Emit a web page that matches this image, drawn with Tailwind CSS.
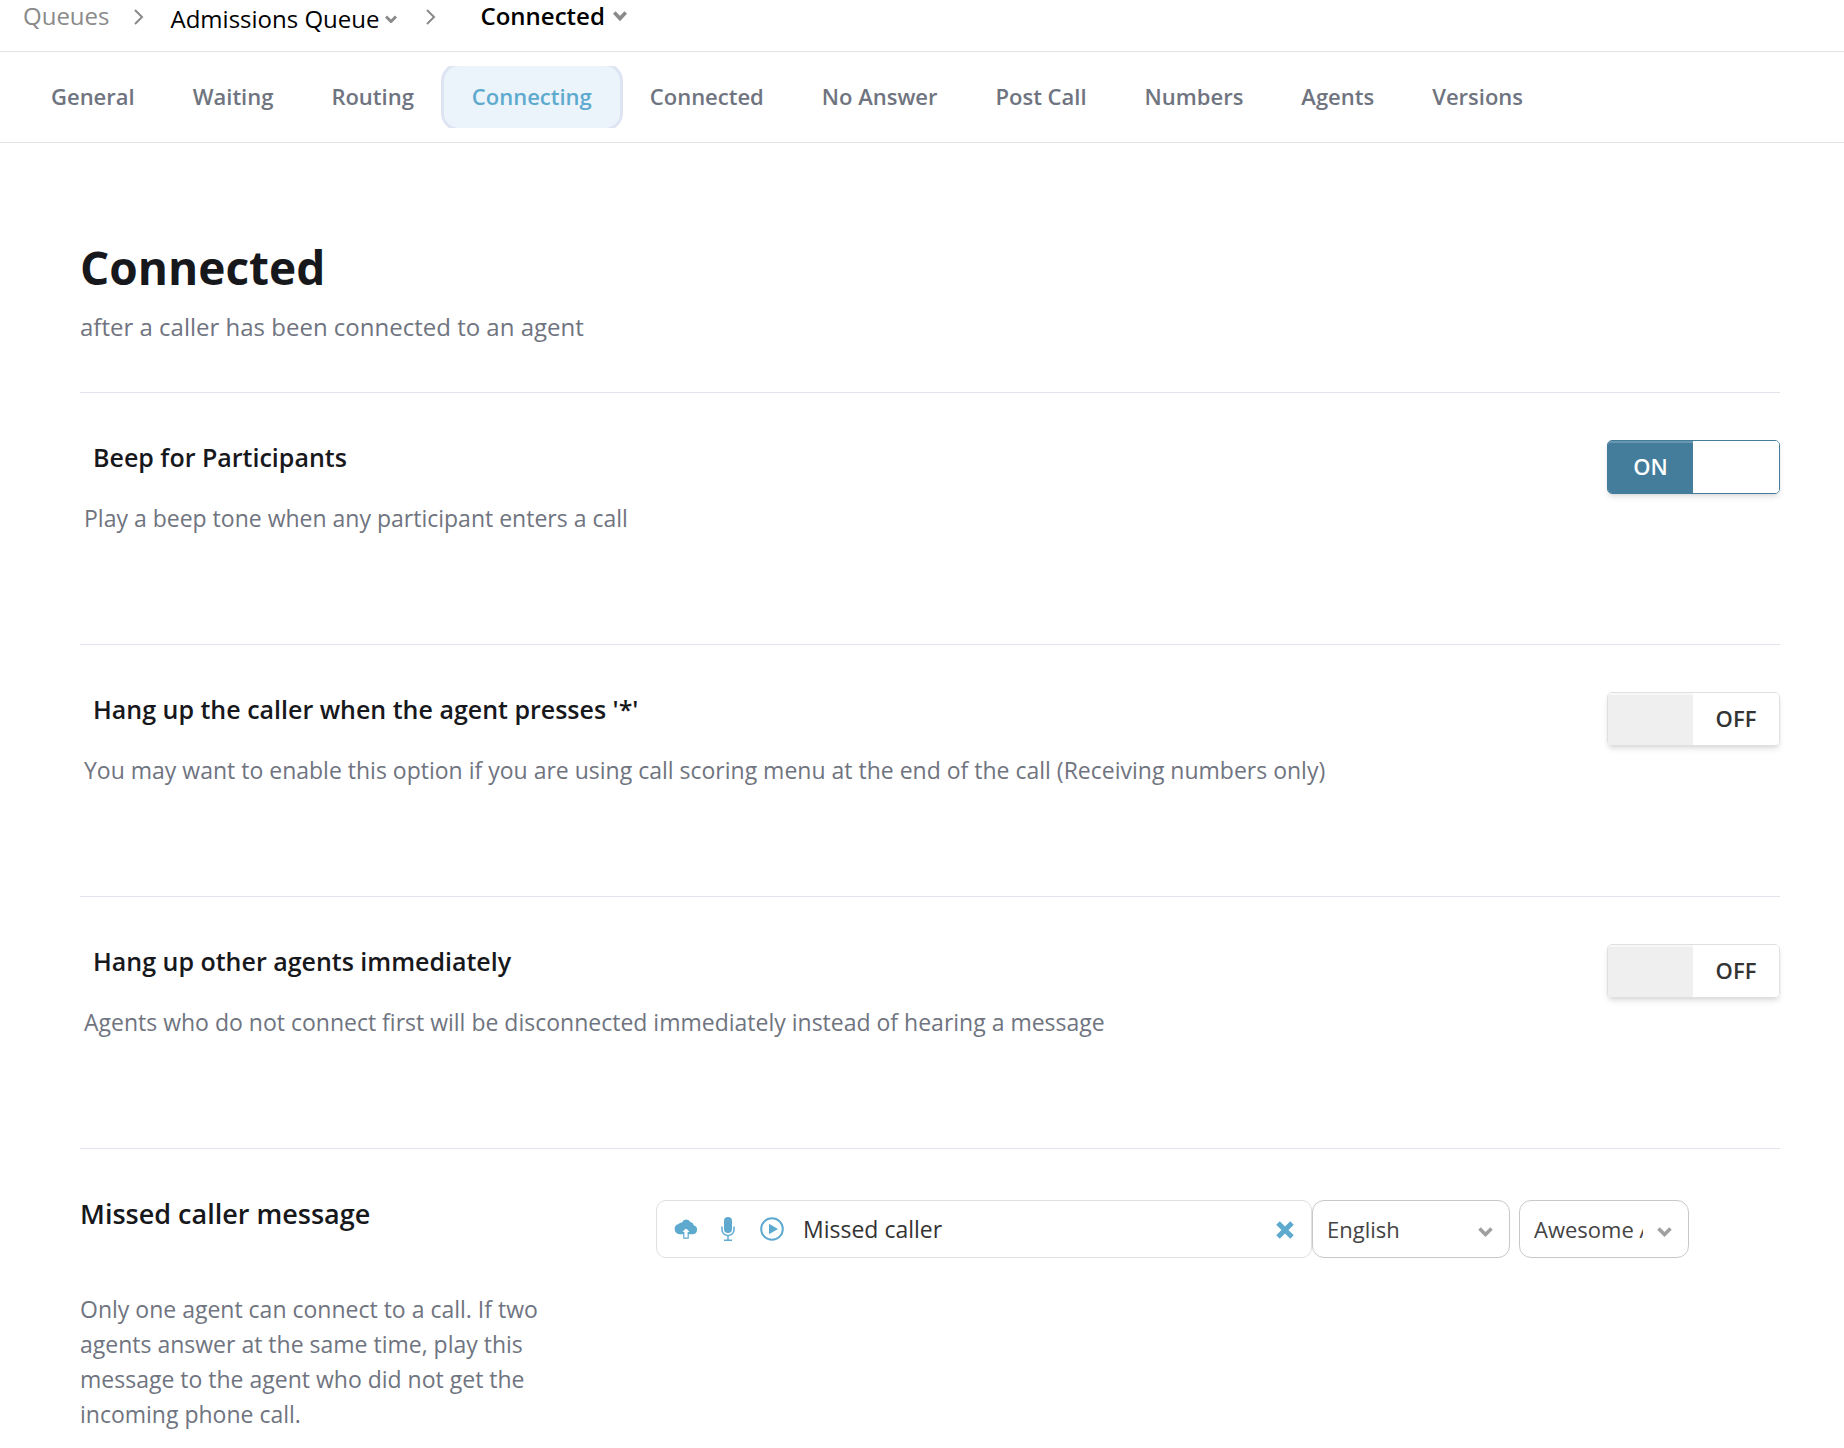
<!DOCTYPE html>
<html lang="en">
<head>
    <meta charset="UTF-8">
    <meta name="viewport" content="width=device-width, initial-scale=1.0">
    <title>Admissions Queue - Connected</title>
    <script src="https://cdn.jsdelivr.net/npm/@tailwindcss/browser@4"></script>
</head>
<body class="bg-white font-['Open_Sans',sans-serif] text-[#17181c] min-h-screen">
    <!-- Breadcrumb -->
    <header class="flex items-start h-[52px] pl-[23px] border-b border-[#e3e3e5] text-[24px] leading-8 text-black">
        <a href="#" class="text-[#8a8a8a]">Queues</a>
        <svg class="w-[10px] h-[16px] mt-[9px] ml-[24px]" viewBox="0 0 10 16" fill="none" stroke="#8a8a8a" stroke-width="2"><path d="M1 1l7 7-7 7"/></svg>
        <button type="button" class="flex items-center pt-[3px] ml-[27px]">
            Admissions Queue
            <svg class="w-[12px] h-[8px] ml-[6px]" viewBox="0 0 12 8" fill="none" stroke="#8a8a8a" stroke-width="3"><path d="M1 1.5l5 5 5-5"/></svg>
        </button>
        <svg class="w-[10px] h-[16px] mt-[9px] ml-[29px]" viewBox="0 0 10 16" fill="none" stroke="#8a8a8a" stroke-width="2"><path d="M1 1l7 7-7 7"/></svg>
        <button type="button" class="flex items-center ml-[44px] font-semibold">
            Connected
            <svg class="w-[14px] h-[10px] ml-[8px]" viewBox="0 0 14 10" fill="none" stroke="#8a8a8a" stroke-width="3.6"><path d="M1.3 1.6l5.7 6 5.7-6"/></svg>
        </button>
    </header>

    <!-- Tabs -->
    <nav class="py-[14px] pl-[22px] border-b border-[#e3e3e8]">
        <div class="flex items-center h-[62px] overflow-hidden text-[22px] leading-[32px] font-semibold text-[#6f7480] whitespace-nowrap">
            <a href="#" class="px-[29px] pb-[2px]">General</a>
            <a href="#" class="px-[29px] pb-[2px]">Waiting</a>
            <a href="#" class="px-[29px] pb-[2px]">Routing</a>
            <a href="#" class="flex items-center shrink-0 h-[68px] px-[28px] pb-[2px] -mx-[2px] border-[3px] border-[#dfe4f3] rounded-[18px] bg-[#ebf4fa] text-[#5eaacf]">Connecting</a>
            <a href="#" class="px-[29px] pb-[2px]">Connected</a>
            <a href="#" class="px-[29px] pb-[2px]">No Answer</a>
            <a href="#" class="px-[29px] pb-[2px]">Post Call</a>
            <a href="#" class="px-[29px] pb-[2px]">Numbers</a>
            <a href="#" class="px-[29px] pb-[2px]">Agents</a>
            <a href="#" class="px-[29px] pb-[2px]">Versions</a>
        </div>
    </nav>

    <main class="pl-[80px] pr-[64px]">
        <div class="pt-[92px] pb-[45px]">
            <h1 class="text-[46px] leading-[64px] font-bold">Connected</h1>
            <p class="mt-[8px] text-[24px] leading-[40px] text-[#6f7480]">after a caller has been connected to an agent</p>
        </div>

        <section class="flex justify-between h-[252px] pt-[47px] border-t border-[#e3e3eb]">
            <div>
                <h2 class="pl-[13px] text-[25px] leading-[34px] font-semibold">Beep for Participants</h2>
                <p class="pl-[4px] mt-[27px] text-[23px] leading-[34px] text-[#6f7480]">Play a beep tone when any participant enters a call</p>
            </div>
            <label class="flex shrink-0 w-[173px] h-[54px] rounded-[5px] border border-[#447d9b] overflow-hidden shadow-md text-[22px] font-semibold text-[#333] cursor-pointer">
                <input type="checkbox" checked class="sr-only" aria-label="Beep for Participants">
                <span class="flex items-center justify-center w-[85px] bg-[#447d9b] border-t-2 border-[#6997af] text-white pb-[4px]">ON</span>
                <span class="flex-1 bg-white"></span>
            </label>
        </section>

        <section class="flex justify-between h-[252px] pt-[47px] border-t border-[#e3e3eb]">
            <div>
                <h2 class="pl-[13px] text-[25px] leading-[34px] font-semibold">Hang up the caller when the agent presses '*'</h2>
                <p class="pl-[4px] mt-[27px] text-[23px] leading-[34px] text-[#6f7480]">You may want to enable this option if you are using call scoring menu at the end of the call (Receiving numbers only)</p>
            </div>
            <label class="flex shrink-0 w-[173px] h-[54px] rounded-[5px] border border-[#e0e0e0] overflow-hidden shadow-md text-[22px] font-semibold text-[#333] cursor-pointer">
                <input type="checkbox" class="sr-only" aria-label="Hang up the caller when the agent presses '*'">
                <span class="w-[85px] bg-[#efefef] border-t-2 border-[#f8f8f8]"></span>
                <span class="flex flex-1 items-center justify-center bg-white pb-[2px]">OFF</span>
            </label>
        </section>

        <section class="flex justify-between h-[252px] pt-[47px] border-t border-[#e3e3eb]">
            <div>
                <h2 class="pl-[13px] text-[25px] leading-[34px] font-semibold">Hang up other agents immediately</h2>
                <p class="pl-[4px] mt-[27px] text-[23px] leading-[34px] text-[#6f7480]">Agents who do not connect first will be disconnected immediately instead of hearing a message</p>
            </div>
            <label class="flex shrink-0 w-[173px] h-[54px] rounded-[5px] border border-[#e0e0e0] overflow-hidden shadow-md text-[22px] font-semibold text-[#333] cursor-pointer">
                <input type="checkbox" class="sr-only" aria-label="Hang up other agents immediately">
                <span class="w-[85px] bg-[#efefef] border-t-2 border-[#f8f8f8]"></span>
                <span class="flex flex-1 items-center justify-center bg-white pb-[2px]">OFF</span>
            </label>
        </section>

        <section class="flex pt-[47px] border-t border-[#e3e3eb]">
            <div class="w-[576px] shrink-0">
                <h2 class="text-[27px] leading-[36px] font-semibold"><label for="message">Missed caller message</label></h2>
                <p class="w-[480px] mt-[60px] text-[23px] leading-[35px] text-[#6f7480]">Only one agent can connect to a call. If two agents answer at the same time, play this message to the agent who did not get the incoming phone call.</p>
            </div>
            <div class="flex items-start pt-[4px] text-[#333]">
                <div class="flex items-center w-[656px] h-[58px] pl-[17px] pr-[17px] border border-[#e0e0e0] rounded-[10px] text-[#5eaacf]">
                    <button type="button" aria-label="Upload">
                        <svg class="block w-[24px] h-[20px]" viewBox="0 0 24 20" fill="currentColor"><path d="M5.500 15.200A5.200 5.200 0 0 1 4.500 5 4 4 0 0 1 8 3.400 4.600 4.600 0 0 1 16.400 3a3.800 3.800 0 0 1 3.300 3.200 4.600 4.600 0 0 1-.7 9z"/><path d="M12 8l4.800 5.600h-2.600v5.600H9.800v-5.600H7.200z" fill="#fff" stroke="currentColor" stroke-width="1.200"/></svg>
                    </button>
                    <button type="button" aria-label="Record" class="ml-[22px]">
                        <svg class="block w-[16px] h-[24px]" viewBox="0 0 16 24"><rect x="4" y="0" width="8" height="16" rx="4" fill="currentColor"/><path d="M2 9.500v3a6 6 0 0 0 12 0v-3M8 18.500v4.500M4 23.200h8" fill="none" stroke="currentColor" stroke-width="1.500"/></svg>
                    </button>
                    <button type="button" aria-label="Play" class="ml-[24px]">
                        <svg class="block w-[24px] h-[24px]" viewBox="0 0 24 24"><circle cx="12" cy="12" r="10.800" fill="none" stroke="currentColor" stroke-width="2"/><path d="M9 6.800l9 5.200-9 5.200z" fill="currentColor"/></svg>
                    </button>
                    <input id="message" type="text" value="Missed caller" class="flex-1 min-w-0 ml-[19px] text-[23px] text-[#333] outline-none">
                    <button type="button" aria-label="Clear">
                        <svg class="block w-[18px] h-[18px] mt-[2px]" viewBox="0 0 18 18" fill="none" stroke="currentColor" stroke-width="5"><path d="M2 2l14 14M16 2L2 16"/></svg>
                    </button>
                </div>
                <div class="relative">
                    <select aria-label="Language" class="block appearance-none w-[198px] h-[58px] pl-[14px] pr-[45px] border border-[#c8c8c8] rounded-[12px] bg-white text-[22px] text-[#444]">
                        <option>English</option>
                    </select>
                    <svg class="absolute right-[17px] top-[27px] w-[15px] h-[10px] pointer-events-none" viewBox="0 0 15 10" fill="none" stroke="#a0a0a0" stroke-width="3.600"><path d="M1.500 1.500l6 6 6-6"/></svg>
                </div>
                <div class="relative ml-[9px]">
                    <select aria-label="Voice" class="block appearance-none w-[170px] h-[58px] pl-[14px] pr-[45px] border border-[#c8c8c8] rounded-[12px] bg-white text-[22px] text-[#444]">
                        <option>Awesome Agent</option>
                    </select>
                    <svg class="absolute right-[17px] top-[27px] w-[15px] h-[10px] pointer-events-none" viewBox="0 0 15 10" fill="none" stroke="#a0a0a0" stroke-width="3.600"><path d="M1.500 1.500l6 6 6-6"/></svg>
                </div>
            </div>
        </section>
    </main>
</body>
</html>
